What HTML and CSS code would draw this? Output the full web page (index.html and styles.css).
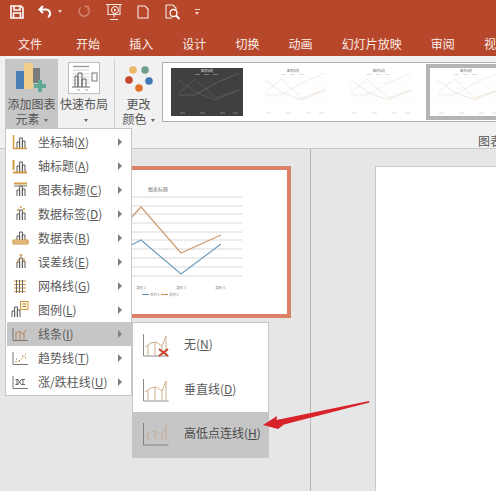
FILE: index.html
```html
<!DOCTYPE html>
<html lang="zh">
<head>
<meta charset="utf-8">
<title>PowerPoint 图表元素</title>
<link rel="stylesheet" href="styles.css">
</head>
<body>
<svg class="defs" width="0" height="0">
  <defs>
    <symbol id="mini" viewBox="0 0 72 48">
      <text x="36" y="4" text-anchor="middle" class="mini-title">图表标题</text>
      <path class="mini-grid" d="M5 10H70M5 15H70M5 20H70M5 25H70M5 30H70M5 35H70M5 40H70"/>
      <polyline class="mini-a" points="8,27 24,27 45,15 68,5"/>
      <polyline class="mini-b" points="8,12 24,24 45,32 68,22"/>
      <polyline class="mini-c" points="8,25 24,11 45,30 68,22"/>
      <path class="mini-tick" d="M9 45h5M29 45h5M49 45h5M62 45h5M24 6.500h5M33 6.500h5M42 6.500h5"/>
    </symbol>
    <symbol id="bars" viewBox="0 0 18 18">
      <path d="M6 15V9h2.600v6M8.600 15V5h2.800v10M11.400 15V8H14v7" fill="none" stroke="#5b5b5b"/>
    </symbol>
  </defs>
</svg>

<header class="titlebar">
  <div class="qat">
    <svg class="q q-save" viewBox="0 0 14 14"><path d="M1 1h10l2 2v10H1z M4 1v4h6V1 M3.500 13V8h7v5" fill="none" stroke="#fff" stroke-width="1.600"/></svg>
    <svg class="q q-undo" viewBox="0 0 14 14"><path d="M5 1 1.500 4.500 5 8M2 4.500h6a4 4 0 0 1 2 7.500" fill="none" stroke="#fff" stroke-width="2"/></svg>
    <span class="caret-w"></span>
    <svg class="q q-redo" viewBox="0 0 14 14"><path d="M8 1.500h4v4M11.500 2.500A5.500 5.500 0 1 1 4 2.500" fill="none" stroke="#d2826c" stroke-width="1.600"/></svg>
    <svg class="q q-show" viewBox="0 0 18 18"><path d="M1 1.500h16M3 1.500v10h12v-10M9 11.500v3M5 16.500h8" fill="none" stroke="#f6e6e0" stroke-width="1.100"/><circle cx="10" cy="7" r="3.500" fill="none" stroke="#fff"/><path d="M9 5.500l2.500 1.500L9 8.500z" fill="#fff"/></svg>
    <svg class="q q-new" viewBox="0 0 12 14"><path d="M1 1h7l3 3v9H1z" fill="none" stroke="#f8ebe6" stroke-width="1.100"/></svg>
    <svg class="q q-prev" viewBox="0 0 16 16"><path d="M1 1h7l3 3v2M1 1v13h6" fill="none" stroke="#f8ebe6" stroke-width="1.100"/><circle cx="8.500" cy="9" r="3.500" fill="none" stroke="#fff" stroke-width="1.300"/><path d="M11 11.500l3.500 3.500" stroke="#fff" stroke-width="1.800"/></svg>
    <span class="custom"></span>
  </div>
  <nav class="tabs">
    <span class="tab tab-file">文件</span>
    <span class="tab">开始</span>
    <span class="tab">插入</span>
    <span class="tab">设计</span>
    <span class="tab">切换</span>
    <span class="tab">动画</span>
    <span class="tab">幻灯片放映</span>
    <span class="tab">审阅</span>
    <span class="tab">视图</span>
  </nav>
</header>

<section class="ribbon">
  <div class="rb rb-add">
    <svg class="rb-icon" width="32" height="32" viewBox="0 0 32 32">
      <rect x="2" y="9" width="8" height="18" fill="#4a7fb8"/>
      <rect x="10" y="1" width="9" height="26" fill="#efcf8a"/>
      <rect x="19" y="6" width="7" height="15" fill="#7b7b7b"/>
      <path d="M24 18h4v4h4v4h-4v4h-4v-4h-4v-4h4z" fill="#5fa896"/>
    </svg>
    <span class="rb-label">添加图表<br>元素<i class="caret"></i></span>
  </div>
  <div class="rb rb-layout">
    <svg class="rb-icon" width="32" height="32" viewBox="0 0 32 32">
      <rect x=".5" y=".5" width="31" height="31" fill="#fff" stroke="#bdbdbd"/>
      <path d="M5 4.500h16" stroke="#a0a0a0" stroke-width="1.500"/>
      <path d="M5 8h16" stroke="#cfcfcf"/>
      <path d="M4 12h18M4 15h18M4 18h18M4 21h18" stroke="#d8d8d8"/>
      <path d="M7 25V14h3v11M10 25V11h4v14M14 25V17h4v8M4 25h18" fill="none" stroke="#666"/>
      <rect x="24" y="11" width="5" height="8" fill="#fff" stroke="#777"/>
      <path d="M9 28h3M17 28h3" stroke="#aaa"/>
    </svg>
    <span class="rb-label">快速布局<br><i class="caret"></i></span>
  </div>
  <div class="sep"></div>
  <div class="rb rb-color">
    <svg class="rb-icon" width="32" height="32" viewBox="0 0 32 32">
      <circle cx="10" cy="8" r="3.800" fill="#e8b768"/>
      <circle cx="22" cy="8" r="3.800" fill="#6f9f8c"/>
      <circle cx="6" cy="18" r="3.800" fill="#c2452f"/>
      <circle cx="26" cy="19" r="3.800" fill="#3f77b8"/>
      <circle cx="16" cy="26" r="3.800" fill="#dd7127"/>
    </svg>
    <span class="rb-label">更改<br>颜色<i class="caret"></i></span>
  </div>
  <div class="gallery-group">
    <div class="gallery">
      <div class="g-thumb g-dark"><svg width="72" height="48"><use href="#mini"/></svg></div>
      <div class="g-thumb"><svg width="72" height="48"><use href="#mini"/></svg></div>
      <div class="g-thumb"><svg width="72" height="48"><use href="#mini"/></svg></div>
      <div class="g-thumb g-sel"><svg width="72" height="48"><use href="#mini"/></svg></div>
    </div>
    <div class="gallery-label">图表样式</div>
  </div>
</section>

<main class="work">
  <aside class="panel">
    <div class="thumb">
      <svg class="thumb-chart" width="183" height="144" viewBox="104 170 183 144">
        <text x="158" y="191" text-anchor="middle" class="t-title">图表标题</text>
        <path class="t-grid" d="M104 197H242M104 206H242M104 214H242M104 223H242M104 232H242M104 240H242M104 249H242M104 258H242M104 267H242M104 276H242"/>
        <polyline class="t-blue" points="118,252 141,240 181,274 221,244"/>
        <polyline class="t-orange" points="118,232 141,207 181,253 221,235"/>
        <text x="141" y="289" class="t-small" text-anchor="middle">类别 1</text>
        <text x="181" y="289" class="t-small" text-anchor="middle">类别 3</text>
        <text x="220" y="289" class="t-small" text-anchor="middle">类别 4</text>
        <path d="M142 294.500h7" stroke="#5b8db5" stroke-width="1"/>
        <text x="150" y="296" class="t-small">系列 1</text>
        <path d="M161 294.500h7" stroke="#d08a4e" stroke-width="1"/>
        <text x="169" y="296" class="t-small">系列 2</text>
      </svg>
    </div>
  </aside>
  <div class="stage">
    <div class="slide"></div>
  </div>
</main>

<div class="menu">
  <div class="mi"><svg class="mi-ic" viewBox="0 0 18 18"><use href="#bars"/><path d="M2.500 2v13.500H16" fill="none" stroke="#d69a45" stroke-width="1.500"/></svg><span class="mi-t">坐标轴(<u>X</u>)</span><i class="tri"></i></div>
  <div class="mi"><svg class="mi-ic" viewBox="0 0 18 18"><use href="#bars"/><path d="M2.500 3v10M2 15.500h14" fill="none" stroke="#d69a45" stroke-width="2"/></svg><span class="mi-t">轴标题(<u>A</u>)</span><i class="tri"></i></div>
  <div class="mi"><svg class="mi-ic" viewBox="0 0 18 18"><use href="#bars"/><path d="M3 2.500h13" stroke="#d69a45" stroke-width="2"/><path d="M3 5h13" stroke="#777"/></svg><span class="mi-t">图表标题(<u>C</u>)</span><i class="tri"></i></div>
  <div class="mi"><svg class="mi-ic" viewBox="0 0 18 18"><use href="#bars"/><path d="M6 5h2M9 2h2M12 4h2" stroke="#d69a45" stroke-width="1.500"/></svg><span class="mi-t">数据标签(<u>D</u>)</span><i class="tri"></i></div>
  <div class="mi"><svg class="mi-ic" viewBox="0 0 18 18"><use href="#bars" y="-2"/><path d="M2 11h15v4H2z" fill="#f6dcb0" stroke="#c98f3f"/><path d="M2 13h15" stroke="#c98f3f"/></svg><span class="mi-t">数据表(<u>B</u>)</span><i class="tri"></i></div>
  <div class="mi"><svg class="mi-ic" viewBox="0 0 18 18"><use href="#bars"/><path d="M10 1v5M8.500 2h3M7 6v4M13 5v4" stroke="#c98f3f"/></svg><span class="mi-t">误差线(<u>E</u>)</span><i class="tri"></i></div>
  <div class="mi"><svg class="mi-ic" viewBox="0 0 18 18"><path d="M3 4h12M3 7.500h12M3 11h12M3 14.500h12" stroke="#d69a45"/><path d="M5.500 3v13M8.500 3v13M11.500 3v13" stroke="#666"/></svg><span class="mi-t">网格线(<u>G</u>)</span><i class="tri"></i></div>
  <div class="mi"><svg class="mi-ic mi-ic-legend" viewBox="0 0 18 18"><use href="#bars" x="-5" y="1"/><rect x="9.500" y=".5" width="7.500" height="8" fill="#fff3d8" stroke="#d69a45"/><path d="M11.500 3h3.500M11.500 5.500h3.500" stroke="#a77a3a"/></svg><span class="mi-t">图例(<u>L</u>)</span><i class="tri"></i></div>
  <div class="mi mi-on"><svg class="mi-ic" viewBox="0 0 18 18"><path d="M2 3v12.500h15" fill="none" stroke="#777"/><path d="M4 9l4-3 4 3 3-4M5 8v7M9 7v8M13 8v7" fill="none" stroke="#b9875a"/></svg><span class="mi-t">线条(<u>I</u>)</span><i class="tri"></i></div>
  <div class="mi"><svg class="mi-ic" viewBox="0 0 18 18"><path d="M2 3v12.500h15" fill="none" stroke="#777"/><path d="M4 13c5 0 8-4 11-9" fill="none" stroke="#d69a45" stroke-dasharray="2 1.500"/><path d="M5 10h1M8 12h1M11 7h1M14 9h1" stroke="#666"/></svg><span class="mi-t">趋势线(<u>T</u>)</span><i class="tri"></i></div>
  <div class="mi"><svg class="mi-ic" viewBox="0 0 18 18"><path d="M2 3v12.500h15" fill="none" stroke="#777"/><path d="M6 6v6M4.500 6.500h3M4.500 11.500h3M12 6v6M10 6.500h4M10 11.500h4M7 7l3 4M10 7l-3 4" fill="none" stroke="#666"/></svg><span class="mi-t">涨/跌柱线(<u>U</u>)</span><i class="tri"></i></div>
</div>

<div class="submenu">
  <div class="si">
    <svg class="si-ic" width="28" height="28" viewBox="0 0 28 28"><path class="ax" d="M1.500 3v22h25"/><path class="ln" d="M6 24V14M13 24V11M20 24V15M24 24V5M3 16l6-4 5-1 6 4 4-10"/><path d="M17 18l9 7M26 18l-9 7" stroke="#c9452d" stroke-width="2"/></svg>
    <span class="si-t">无(<u>N</u>)</span>
  </div>
  <div class="si">
    <svg class="si-ic" width="28" height="28" viewBox="0 0 28 28"><path class="ax" d="M1.500 3v22h25"/><path class="ln" d="M6 24V14M13 24V11M20 24V15M24 24V5M3 16l6-4 5-1 6 4 4-10"/></svg>
    <span class="si-t">垂直线(<u>D</u>)</span>
  </div>
  <div class="si si-on">
    <svg class="si-ic" width="28" height="28" viewBox="0 0 28 28"><path class="ax" d="M1.500 3v22h25"/><path class="ln" d="M6 21V14M13 19V11M20 20V15M24 19V5"/><path class="ln2" d="M3 16l6-4 5-1 6 4 4-10"/></svg>
    <span class="si-t">高低点连线(<u>H</u>)</span>
  </div>
</div>

<svg class="pointer" width="112" height="34" viewBox="0 0 112 34">
  <path d="M1 25 15 16 14.500 20 107 1 107.500 2.500 22 24.500 16 29z" fill="#d8232a"/>
</svg>
</body>
</html>
```
FILE: styles.css
```css
* { box-sizing: border-box; }
html, body { margin: 0; height: 100%; }
body {
  position: relative;
  width: 496px;
  height: 491px;
  overflow: hidden;
  display: flex;
  flex-direction: column;
  background: #e6e6e6;
  color: #555;
  font: 12px/15px "Noto Sans CJK SC", "Liberation Sans", sans-serif;
}
.defs { position: absolute; }

/* title bar */
.titlebar { height: 56px; flex: none; background: #b7472a; color: #fff; }
.qat { height: 36px; display: flex; align-items: center; padding: 0 0 13px 10px; }
.q { display: block; flex: none; }
.q-save { width: 14px; height: 14px; }
.q-undo { width: 14px; height: 14px; margin-left: 14px; }
.caret-w { width: 0; height: 0; margin-left: 6px; border: 2.500px solid transparent; border-top: 3px solid #f0d0c6; border-bottom: 0; }
.q-redo { width: 13px; height: 13px; margin-left: 15px; }
.q-show { width: 18px; height: 18px; margin-left: 15px; }
.q-new { width: 12px; height: 14px; margin-left: 14px; }
.q-prev { width: 16px; height: 16px; margin-left: 16px; }
.custom { width: 5px; height: 6px; margin-left: 14px; border-top: 1px solid #f0d0c6; position: relative; }
.custom::after { content: ""; position: absolute; left: 0; top: 2px; border: 2.500px solid transparent; border-top: 3px solid #f0d0c6; border-bottom: 0; }

.tabs { display: flex; gap: 29.100px; padding-left: 18px; height: 20px; white-space: nowrap; line-height: 16px; color: #fbeee9; }
.tab { flex: none; }
.tab-file { margin-right: 5px; }

/* ribbon */
.ribbon { height: 93px; flex: none; display: flex; align-items: flex-start; background: #f1f1f1; border-bottom: 1px solid #c9c9c9; padding: 3px 0 0 5px; }
.rb { flex: none; display: flex; flex-direction: column; align-items: center; text-align: center; height: 69px; }
.rb-icon { display: block; flex: none; margin-top: 3px; }
.rb-label { display: block; margin-top: 2px; white-space: nowrap; }
.rb-add { width: 53px; background: #c6c6c6; }
.rb-add .rb-icon { margin-top: 3px; margin-left: -4px; }
.rb-layout { width: 52px; }
.sep { width: 1px; height: 69px; background: #d2d2d2; margin: 0 0 0 4px; }
.rb-color { width: 47px; }
.caret { display: inline-block; width: 0; height: 0; margin-left: 4px; vertical-align: 2px; border: 2.500px solid transparent; border-top: 3px solid #666; border-bottom: 0; }

.gallery-group { flex: none; width: 333px; padding-top: 3px; }
.gallery { height: 60px; width: 340px; display: flex; align-items: center; gap: 14px; padding-left: 8px; background: #fff; border: 1px solid #ababab; border-right: 0; }
.gallery-label { margin: 11px 0 0 316px; white-space: nowrap; color: #555; }
.g-thumb {
  flex: none; width: 72px; height: 48px;
  --title: #777; --grid: #f6f6f6; --a: #ece6df; --b: #e6dcd6; --c: #eedfd0; --tick: #d4d4d4;
}
.g-thumb svg { display: block; }
.g-dark {
  background: #404040;
  --title: #ddd; --grid: #404040; --a: #6c6c6c; --b: #5f5f5f; --c: #6e5a50; --tick: #8a8a8a;
}
.g-sel { width: 80px; height: 56px; margin-left: -3px; background: #fff; border: 4px solid #b5b5b5; border-right: 0; }

.mini-title { font-size: 3px; fill: var(--title); }
.mini-grid { stroke: var(--grid); stroke-width: .5; fill: none; }
.mini-a, .mini-b, .mini-c { fill: none; stroke-width: .7; }
.mini-a { stroke: var(--a); }
.mini-b { stroke: var(--b); }
.mini-c { stroke: var(--c); }
.mini-tick { stroke: var(--tick); stroke-width: .8; fill: none; }

/* workspace */
.work { flex: 1; min-height: 0; display: flex; }
.panel { width: 311px; flex: none; border-right: 1px solid #b8b8b8; padding: 17px 19px 0 0; display: flex; justify-content: flex-end; align-items: flex-start; }
.thumb { width: 191px; height: 152px; background: #fff; border: 4px solid #dd8068; }
.thumb-chart { display: block; }
.t-title { font-size: 5px; fill: #777; }
.t-grid { stroke: #cfcfcf; stroke-width: .8; fill: none; }
.t-blue, .t-orange { fill: none; stroke-width: 1.200; }
.t-blue { stroke: #6f9cbd; }
.t-orange { stroke: #cf9a6c; }
.t-small { font-size: 3.500px; fill: #888; }
.stage { flex: 1; padding: 17px 0 0 64px; }
.slide { height: 100%; background: #fff; border: 1px solid #c9c9c9; border-width: 1px 0 0 1px; }

/* menus */
.menu { position: absolute; left: 5px; top: 128px; width: 127px; height: 268px; padding: 1px 0 0 1px; background: #fff; border: 1px solid #c6c6c6; }
.mi { height: 24px; display: flex; align-items: center; padding-left: 4px; color: #5a5a5a; white-space: nowrap; }
.mi-ic { width: 18px; height: 18px; flex: none; margin-right: 9px; }
.mi-t { flex: none; padding-bottom: 2px; }
.tri { margin-left: auto; margin-right: 9px; width: 0; height: 0; flex: none; border-left: 4px solid #808080; border-top: 4px solid transparent; border-bottom: 4px solid transparent; }
.mi-on { background: #c6c6c6; }
.mi-ic-legend { overflow: visible; }

.submenu { position: absolute; left: 132px; top: 322px; width: 137px; height: 136px; background: #fff; border: 1px solid #c6c6c6; }
.si { height: 44.600px; display: flex; align-items: center; padding-left: 9px; color: #5a5a5a; white-space: nowrap; }
.si-ic { flex: none; margin-right: 14px; }
.si-t { flex: none; padding-bottom: 3px; }
.si-on { background: #c6c6c6; color: #4a4a4a; }
.ax { fill: none; stroke: #7d7d7d; stroke-width: .9; }
.ln { fill: none; stroke: #c9a57d; stroke-width: .9; }
.ln2 { fill: none; stroke: #bfae9e; stroke-width: .8; }

.pointer { position: absolute; left: 262px; top: 400px; }
```
